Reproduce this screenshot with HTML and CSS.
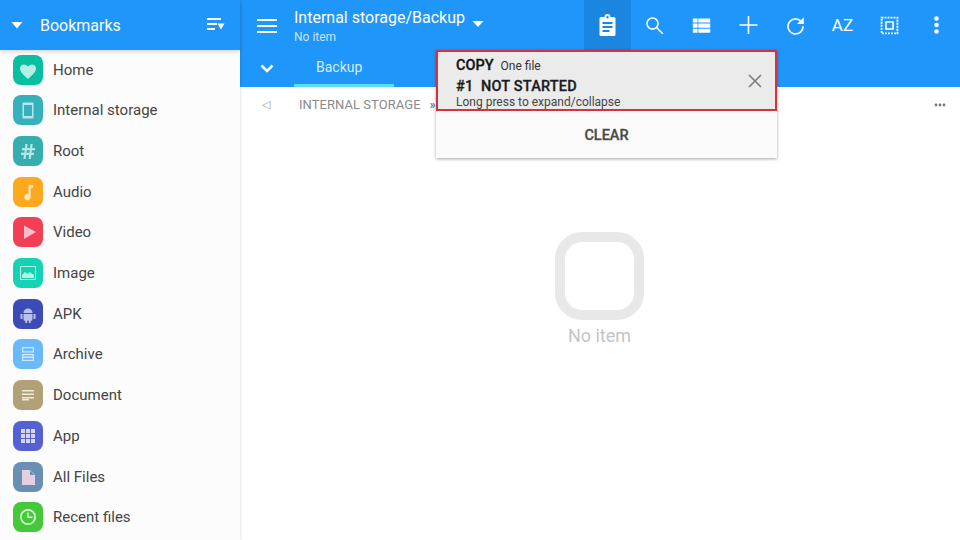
FILE: index.html
```html
<!DOCTYPE html>
<html lang="en">
<head>
<meta charset="utf-8">
<title>Bookmarks</title>
<link rel="stylesheet" href="styles.css">
</head>
<body>
<div class="app">
  <aside class="sidebar">
    <header class="side-head">
      <svg class="side-caret" viewBox="0 0 12 8"><path d="M0.5 1h11L6 7.500z"/></svg>
      <span class="side-title">Bookmarks</span>
      <svg class="side-sort" viewBox="0 0 18 14"><path d="M0 1h14v2H0zM0 6h10v2H0zM0 11h8v2H0z"/><path d="M10.500 6.500h7l-3.500 6z"/></svg>
    </header>
    <ul class="bookmarks">
      <li class="bm"><span class="bm-icon c-home"><svg viewBox="0 0 30 30"><path d="M15 24l-1.400-1.300C8.600 18.200 7 16 7 13.300 7 11 8.800 9.500 11 9.500c1.500 0 3 .8 4 2 1-1.200 2.500-2 4-2 2.200 0 4 1.500 4 3.800 0 2.700-1.600 4.900-6.600 9.400z"/></svg></span>Home</li>
      <li class="bm"><span class="bm-icon c-int"><svg viewBox="0 0 30 30"><path fill-rule="evenodd" d="M10.500 7.500h9a1 1 0 0 1 1 1v14a1 1 0 0 1-1 1h-9a1 1 0 0 1-1-1v-14a1 1 0 0 1 1-1zM11 10v11h8V10z"/></svg></span>Internal storage</li>
      <li class="bm"><span class="bm-icon c-root"><svg viewBox="0 0 30 30"><path d="M12.300 8h2.200l-.5 4h3l.5-4h2.200l-.5 4H22v2.200h-3.100l-.3 2.600H21V19h-2.700l-.5 4h-2.200l.5-4h-3l-.5 4h-2.200l.5-4H8v-2.200h3.400l.3-2.600H9V12h3zm1.500 6.200l-.3 2.600h3l.3-2.600z"/></svg></span>Root</li>
      <li class="bm"><span class="bm-icon c-audio"><svg viewBox="0 0 30 30"><path d="M15.500 8h4.500v3h-2.300v9a3.200 3.200 0 1 1-2.200-3z"/></svg></span>Audio</li>
      <li class="bm"><span class="bm-icon c-video"><svg viewBox="0 0 30 30"><path d="M11 8.500l12 6.500-12 7z"/></svg></span>Video</li>
      <li class="bm"><span class="bm-icon c-image"><svg viewBox="0 0 30 30"><path fill-rule="evenodd" d="M7 8h16v14H7zm1 1v12h14V9z"/><path d="M9 20v-3l3-3 2.500 2 2-2 4.500 3v3z"/></svg></span>Image</li>
      <li class="bm"><span class="bm-icon c-apk"><svg viewBox="0 0 30 30"><path d="M10.500 14a4.500 4.500 0 0 1 9 0zM10.500 15h9v5.500a1.200 1.200 0 0 1-1.200 1.200h-.6V24h-1.800v-2.300h-1.800V24h-1.800v-2.300h-.6a1.200 1.200 0 0 1-1.200-1.200zM7.500 15h2v5h-2zM20.500 15h2v5h-2z"/></svg></span>APK</li>
      <li class="bm"><span class="bm-icon c-arch"><svg viewBox="0 0 30 30"><path fill-rule="evenodd" d="M9 8h12v5.500H9zm1.300 1.300v3h9.400v-3zM9 15h12v7H9zm1.300 1.300v1.200h9.400v-1.200zm0 2.700v1.700h9.400V19z"/></svg></span>Archive</li>
      <li class="bm"><span class="bm-icon c-doc"><svg viewBox="0 0 30 30"><path d="M9 10h12v1.500H9zM9 13.500h12V15H9zM9 17h12v1.500H9zM9 19h7v1.500H9z"/></svg></span>Document</li>
      <li class="bm"><span class="bm-icon c-app"><svg viewBox="0 0 30 30"><path d="M8 8h4v4H8zM13 8h4v4h-4zM18 8h4v4h-4zM8 13h4v4H8zM13 13h4v4h-4zM18 13h4v4h-4zM8 18h4v4H8zM13 18h4v4h-4zM18 18h4v4h-4z"/></svg></span>App</li>
      <li class="bm"><span class="bm-icon c-all"><svg viewBox="0 0 30 30"><path d="M9 8h8l5 5v10H9z"/><path class="ic-cut" d="M17 8.500l4.500 4.500h-4.500z"/></svg></span>All Files</li>
      <li class="bm"><span class="bm-icon c-recent"><svg viewBox="0 0 30 30"><path fill-rule="evenodd" d="M15 7a8 8 0 1 1 0 16 8 8 0 0 1 0-16zm0 1.700a6.300 6.300 0 1 0 0 12.600 6.300 6.300 0 0 0 0-12.600z"/><path d="M14.200 10.500h1.500v4h4V16h-5.500z"/></svg></span>Recent files</li>
    </ul>
  </aside>

  <main class="main">
    <header class="topbar">
      <button class="menu-btn" aria-label="Menu"><svg viewBox="0 0 20 14"><path d="M0 0h20v2H0zM0 6h20v2H0zM0 12h20v2H0z"/></svg></button>
      <div class="path">
        <div class="path-title">Internal storage/Backup<svg class="path-caret" viewBox="0 0 12 8"><path d="M0.500 1h11L6 7z"/></svg></div>
        <div class="path-sub">No item</div>
      </div>
      <nav class="actions">
        <button class="act act-on" aria-label="Clipboard"><svg viewBox="0.5 0 24 24"><path fill-rule="evenodd" d="M5.500 4H9a3 3 0 0 1 6 0h3.500A1.500 1.500 0 0 1 20 5.500v16a1.500 1.500 0 0 1-1.500 1.500h-13A1.500 1.500 0 0 1 4 21.500v-16A1.500 1.500 0 0 1 5.500 4zM12 3a1.200 1.200 0 1 0 0 2.400A1.200 1.200 0 0 0 12 3zM7 9v2h10V9zm0 4v2h10v-2zm0 4v2h7v-2z"/></svg></button>
        <button class="act act-sm" aria-label="Search"><svg viewBox="0 0 24 24"><circle class="st" cx="9.500" cy="9.500" r="7"/><path class="st" d="M14.500 14.500l8 8"/></svg></button>
        <button class="act act-sm" aria-label="List"><svg viewBox="0 0 24 24"><path d="M1 3h6v5.200H1zM8 3h15v5.200H8zM1 9.500h6v5.200H1zM8 9.500h15v5.200H8zM1 16h6v5.200H1zM8 16h15v5.200H8z"/></svg></button>
        <button class="act" aria-label="Add"><svg viewBox="0.5 0 24 24"><path d="M11.200 3h1.600v8.200H21v1.600h-8.200V21h-1.600v-8.200H3v-1.600h8.200z"/></svg></button>
        <button class="act act-sm" aria-label="Refresh"><svg viewBox="0 0 24 24"><path class="st" d="M18.800 6.500A9.500 9.500 0 1 0 21.500 13"/><path d="M14 10h8.500V1.500z"/></svg></button>
        <button class="act act-text">AZ</button>
        <button class="act act-sm" aria-label="Select"><svg viewBox="0 0 24 24"><path class="dots" d="M2 2h20v20H2z"/><path class="st" d="M7.500 7.500h9v9h-9z"/></svg></button>
        <button class="act" aria-label="More"><svg viewBox="0.5 0 24 24"><circle cx="12" cy="5.500" r="2.300"/><circle cx="12" cy="12" r="2.300"/><circle cx="12" cy="18.500" r="2.300"/></svg></button>
      </nav>
    </header>
    <div class="tabbar">
      <button class="tab-toggle" aria-label="Collapse"><svg viewBox="0 0 14 9"><path class="st" d="M1.500 1.500L7 7l5.500-5.500"/></svg></button>
      <div class="tab">Backup</div>
    </div>
    <div class="crumbs">
      <span class="crumb-back">◁</span>
      <span class="crumb">INTERNAL STORAGE</span>
      <span class="crumb-sep">»</span>
      <svg class="crumb-more" viewBox="0 0 12 4"><circle cx="2" cy="2" r="1.400"/><circle cx="6" cy="2" r="1.400"/><circle cx="10" cy="2" r="1.400"/></svg>
    </div>
    <section class="empty">
      <div class="empty-box"></div>
      <div class="empty-text">No item</div>
    </section>

    <div class="popup">
      <div class="task">
        <div class="task-text">
          <div class="task-line1"><b>COPY</b><span>One file</span></div>
          <div class="task-line2">#1&nbsp; NOT STARTED</div>
          <div class="task-line3">Long press to expand/collapse</div>
        </div>
        <svg class="task-close" viewBox="0 0 14 14"><path d="M1 1l12 12M13 1L1 13"/></svg>
      </div>
      <div class="clear">CLEAR</div>
    </div>
  </main>
</div>
</body>
</html>
```
FILE: styles.css
```css
* { box-sizing: border-box; }
html, body { margin: 0; height: 100%; }
body { width: 960px; height: 540px; overflow: hidden; font-family: Roboto, "Liberation Sans", sans-serif; background: #fff; color: #444; }
button { border: 0; padding: 0; background: none; color: inherit; font: inherit; }
svg { display: block; fill: currentColor; }
.st { fill: none; stroke: currentColor; stroke-width: 2; }

.app { display: flex; width: 960px; height: 540px; }

.sidebar { width: 240px; height: 540px; flex: none; background: #fcfcfc; box-shadow: 0 0 3px rgba(0,0,0,.18); position: relative; z-index: 2; display: flex; flex-direction: column; }
.side-head { height: 50px; flex: none; background: #1e96fa; color: #fff; display: flex; align-items: center; padding: 0 15px 0 11px; box-shadow: 0 2px 4px rgba(0,0,0,.14); }
.side-caret { width: 12px; height: 8px; margin-right: 17px; }
.side-title { font-size: 16px; flex: 1; margin-top: 1px; }
.side-sort { width: 18px; height: 14px; margin-top: -2px; }

.bookmarks { list-style: none; margin: -.72px 0 0; padding: 0; }
.bm { height: 40.7px; display: flex; align-items: center; padding-left: 13px; font-size: 15px; color: #444; }
.bm-icon { width: 30px; height: 30px; border-radius: 8px; margin-right: 10px; flex: none; }
.bm-icon svg { width: 30px; height: 30px; }
.c-home { background: #08bfa2; color: #b6efe5; }
.c-int { background: #36b1bc; color: #b5e6ea; }
.c-root { background: #36aeb0; color: #b5e6e6; }
.c-audio { background: #fea820; color: #ffe6b5; }
.c-video { background: #f33f56; color: #f9bfca; }
.c-image { background: #14d2b2; color: #b6f1e6; }
.c-apk { background: #3d4bb7; color: #b9c1ea; }
.c-arch { background: #6abafa; color: #cfe8fd; }
.c-doc { background: #b2a077; color: #f0ebdf; }
.c-app { background: #5560d3; color: #d5d8f5; }
.c-all { background: #6a8fb5; color: #e6cfe3; }
.c-all .ic-cut { fill: #6a8fb5; }
.c-recent { background: #45c93b; color: #d5f5d2; }

.main { position: relative; flex: 1; display: flex; flex-direction: column; min-width: 0; }
.topbar { height: 50px; flex: none; background: #1e96fa; color: #fff; display: flex; align-items: stretch; padding-left: 17px; }
.menu-btn { width: 20px; flex: none; display: flex; align-items: center; }
.menu-btn svg { width: 20px; height: 14px; margin-top: 1px; }
.path { width: 290px; flex: none; margin-left: 17px; padding-top: 8px; }
.path-title { font-size: 16px; line-height: 20px; display: flex; align-items: center; }
.path-caret { width: 12px; height: 8px; margin: 0 0 0 7px; transform: translateY(6px); }
.path-sub { font-size: 12px; line-height: 14px; margin-top: 2px; color: #c8e4fd; }
.actions { display: flex; margin-left: auto; }
.act { width: 47px; flex: none; display: flex; align-items: center; justify-content: center; color: #fff; }
.act svg { width: 24px; height: 24px; }
.act-sm svg { width: 19px; height: 19px; }
.act-on { background: #1a86e0; }
.act-text { font-size: 17px; font-weight: 400; }
.dots { fill: none; stroke: currentColor; stroke-width: 2.400; stroke-dasharray: 2.400 1.400; }

.tabbar { height: 37px; flex: none; background: #1e96fa; display: flex; color: #fff; }
.tab-toggle { width: 54px; flex: none; display: flex; align-items: center; justify-content: center; }
.tab-toggle svg { width: 14px; height: 9px; }
.tab-toggle .st { stroke-width: 2.600; }
.tab { width: 100px; padding: 0 0 0 22px; font-size: 14px; line-height: 34px; color: #d6ecfe; border-bottom: 3px solid #5fdcf0; }

.crumbs { height: 35px; flex: none; display: flex; align-items: center; padding: 0 14px 0 22px; font-size: 13px; color: #8a8a8a; }
.crumb-back { width: 37px; font-size: 11px; color: #999; }
.crumb { margin-right: 9px; letter-spacing: .05px; }
.crumb-sep { color: #555; }
.crumb-more { margin-left: auto; width: 12px; height: 4px; color: #777; }

.empty { flex: 1; display: flex; flex-direction: column; align-items: center; padding: 110px 2px 0 0; }
.empty-box { width: 89px; height: 88px; border: 10px solid #e8e8e8; border-radius: 27px; }
.empty-text { font-size: 18px; line-height: 24px; margin-top: 4px; color: #c4c4c4; padding-left: 1px; }

.popup { position: absolute; left: 196px; top: 50px; width: 341px; z-index: 3; background: #fafafa; box-shadow: 0 1px 3px rgba(0,0,0,.35); }
.task { height: 61px; background: #ebebeb; border: 2px solid #d8303c; display: flex; align-items: center; padding: 0 13px 0 18px; color: #1c1c1c; }
.task-text { flex: 1; padding-top: 3px; }
.task-line1 { display: flex; align-items: baseline; line-height: 17px; font-size: 12px; color: #333; }
.task-line1 b { font-size: 14.500px; font-weight: 500; color: #111; margin-right: 7px; -webkit-text-stroke: .3px #111; }
.task-line2 { font-size: 14.500px; line-height: 18px; font-weight: 500; letter-spacing: .2px; margin-top: 3px; -webkit-text-stroke: .3px #1c1c1c; }
.task-line3 { font-size: 12px; line-height: 12px; color: #444; }
.task-close { width: 14px; height: 14px; fill: none; stroke: #7c7c7c; stroke-width: 1.600; }
.clear { height: 47px; padding-top: 2px; display: flex; align-items: center; justify-content: center; font-size: 14.500px; font-weight: 500; color: #4a4a4a; -webkit-text-stroke: .3px #4a4a4a; }
```
